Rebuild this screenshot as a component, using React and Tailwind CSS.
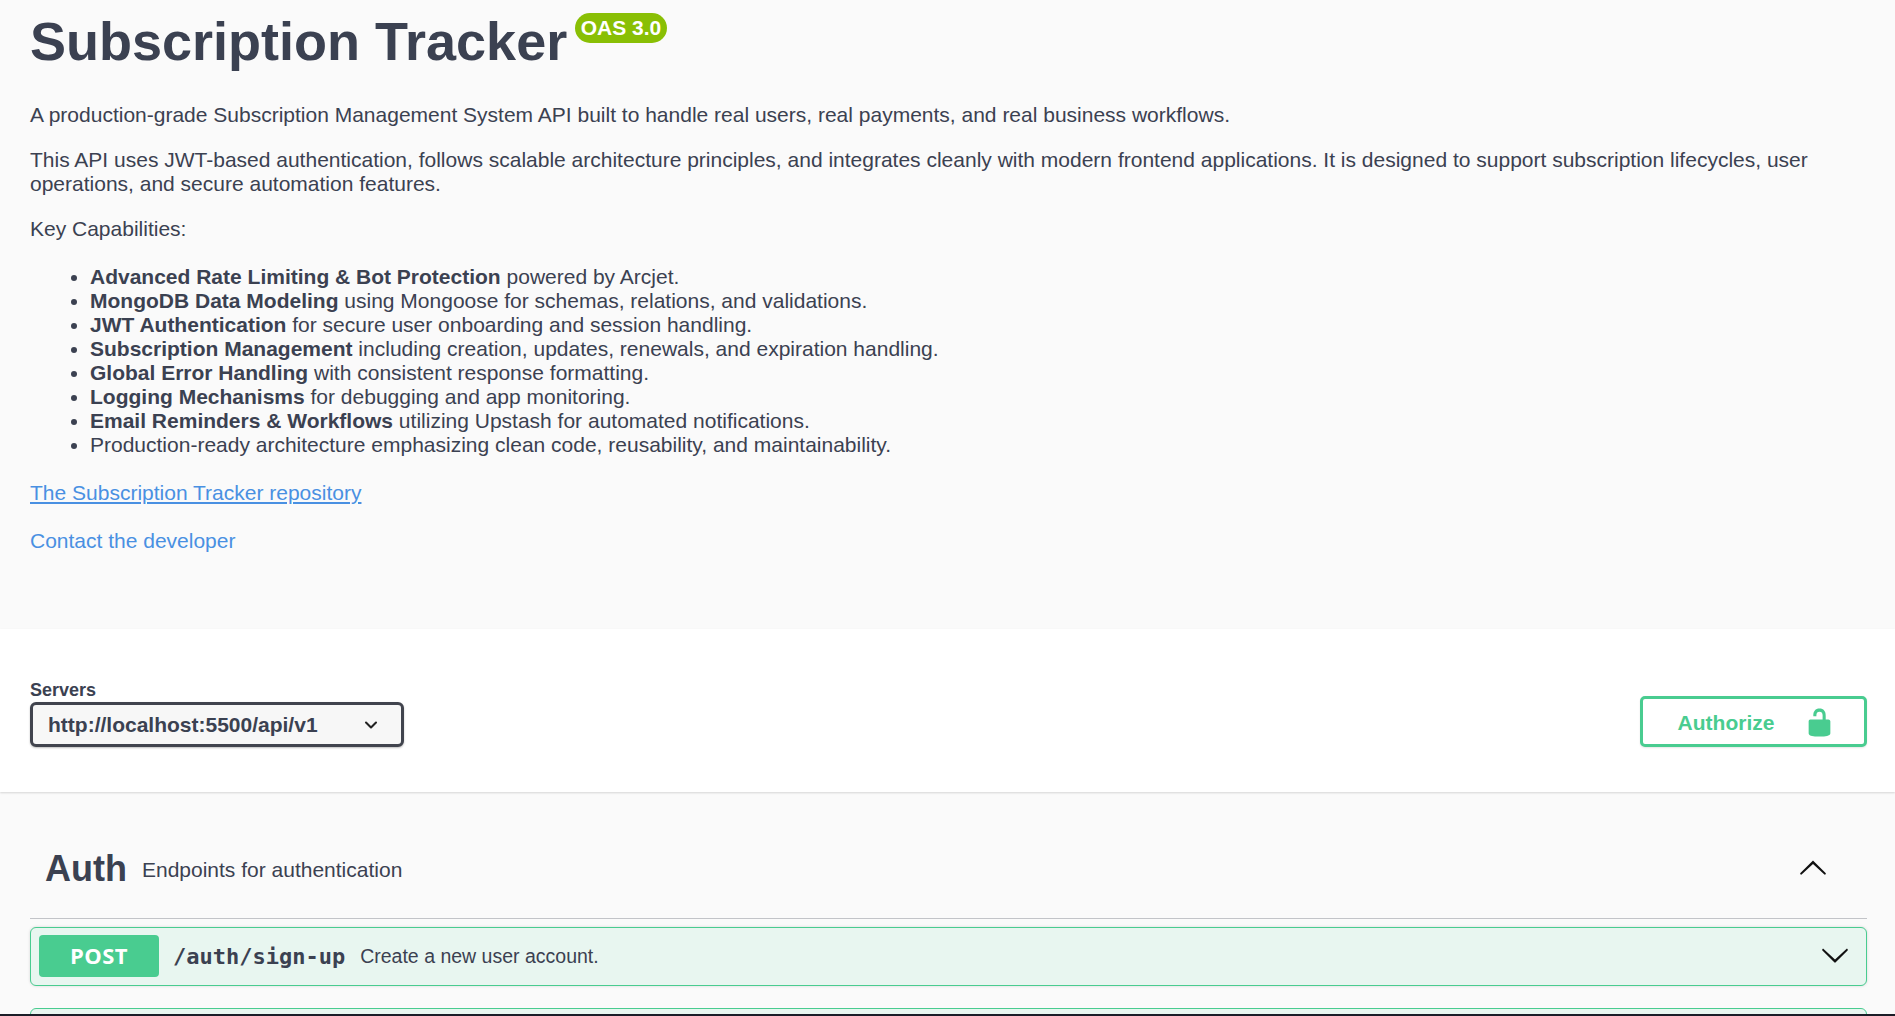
import { ChevronDown } from 'lucide-react';

function Bullet({ strong, children }) {
  return (
    <li>
      {strong && <strong className="font-bold">{strong}</strong>}
      {children}
    </li>
  );
}

export default function App() {
  return (
    <div className="h-screen overflow-hidden flex flex-col bg-[#fafafa] text-[#3b4151] font-['Liberation_Sans',Arial,sans-serif]">
      <section className="h-[629px] shrink-0 px-[30px] pt-[10px]">
        <div className="flex items-start h-[64px]">
          <h1 className="-mt-[1px] text-[54px] leading-[64px] font-bold">Subscription Tracker</h1>
          <span className="ml-[8px] mt-[3px] h-[30px] px-[5.5px] rounded-[15px] bg-[#89bf04] text-white text-[21px] leading-[29px] font-bold">OAS 3.0</span>
        </div>
        <div className="text-[21px] leading-[24px]">
          <p className="mt-[29px]">A production-grade Subscription Management System API built to handle real users, real payments, and real business workflows.</p>
          <p className="mt-[21px]">This API uses JWT-based authentication, follows scalable architecture principles, and integrates cleanly with modern frontend applications. It is designed to support subscription lifecycles, user operations, and secure automation features.</p>
          <p className="mt-[21px]">Key Capabilities:</p>
          <ul className="mt-[24px] pl-[60px] list-disc">
            <Bullet strong="Advanced Rate Limiting & Bot Protection"> powered by Arcjet.</Bullet>
            <Bullet strong="MongoDB Data Modeling"> using Mongoose for schemas, relations, and validations.</Bullet>
            <Bullet strong="JWT Authentication"> for secure user onboarding and session handling.</Bullet>
            <Bullet strong="Subscription Management"> including creation, updates, renewals, and expiration handling.</Bullet>
            <Bullet strong="Global Error Handling"> with consistent response formatting.</Bullet>
            <Bullet strong="Logging Mechanisms"> for debugging and app monitoring.</Bullet>
            <Bullet strong="Email Reminders & Workflows"> utilizing Upstash for automated notifications.</Bullet>
            <Bullet>Production-ready architecture emphasizing clean code, reusability, and maintainability.</Bullet>
          </ul>
          <p className="mt-[24px]"><a className="text-[#4990e2] underline">The Subscription Tracker repository</a></p>
          <p className="mt-[24px]"><a className="text-[#4990e2]">Contact the developer</a></p>
        </div>
      </section>

      <section className="h-[163px] shrink-0 bg-white shadow-[0_1px_2px_rgba(0,0,0,0.15)] pl-[30px] pr-[28px] flex items-end justify-between pb-[45px] relative">
        <div>
          <div className="text-[18px] leading-[20px] font-bold">Servers</div>
          <div className="mt-[2px] w-[374px] h-[45px] border-[3px] border-[#41444e] rounded-[6px] bg-[#f7f7f7] shadow-[0_1px_2px_rgba(0,0,0,0.25)] flex items-center justify-between pl-[15px] pr-[20px]">
            <span className="text-[21px] font-bold">http://localhost:5500/api/v1</span>
            <ChevronDown className="w-[20px] h-[20px] text-[#222]" strokeWidth={2.5} />
          </div>
        </div>
        <button className="w-[227px] h-[51px] border-[3px] border-[#49cc90] rounded-[5px] bg-white text-[#49cc90] text-[21px] font-bold flex items-center justify-center gap-[30px] pl-[6px] pt-[2px] shadow-[0_1px_2px_rgba(0,0,0,0.1)]">
          Authorize
          <svg viewBox="0 0 20 20" className="w-[31px] h-[31px] fill-[#49cc90]">
            <path d="M15.8 8H14V5.6C14 2.703 12.665 1 10 1 7.334 1 6 2.703 6 5.6V6h2v-.801C8 3.754 8.797 3 10 3c1.203 0 2 .754 2 2.199V8H4c-.553 0-1 .646-1 1.199V17c0 .549.428 1.139.951 1.307l1.197.387C5.672 18.861 6.55 19 7.1 19h5.8c.549 0 1.428-.139 1.951-.307l1.196-.387c.524-.167.953-.757.953-1.306V9.199C17 8.646 16.352 8 15.8 8z" />
          </svg>
        </button>
      </section>

      <main className="flex-1 min-h-0 overflow-hidden pl-[30px] pr-[28px]">
        <div className="h-[127px] border-b border-[#c2c4c8] flex items-center pt-[28px] pl-[15px] pr-[39px]">
          <h3 className="text-[36px] font-bold leading-none">Auth</h3>
          <span className="ml-[15px] pt-[1px] text-[21px]">Endpoints for authentication</span>
          <svg viewBox="0 0 20 20" className="ml-auto -mt-[5px] w-[30px] h-[30px] fill-[#111]">
            <path d="M 17.418 14.908 C 17.69 15.176 18.127 15.176 18.397 14.908 C 18.667 14.64 18.668 14.207 18.397 13.939 L 10.489 6.109 C 10.219 5.841 9.782 5.841 9.51 6.109 L 1.602 13.939 C 1.332 14.207 1.332 14.64 1.602 14.908 C 1.873 15.176 2.311 15.176 2.581 14.908 L 10 7.94 Z" />
          </svg>
        </div>
        <div className="mt-[8px] h-[59px] border border-[#49cc90] rounded-[6px] bg-[#e8f6f0] shadow-[0_0_3px_rgba(0,0,0,0.15)] flex items-center pl-[8px] pr-[16px]">
          <span className="-mt-[1px] w-[120px] h-[42px] rounded-[4px] bg-[#49cc90] text-white text-[22px] tracking-[0.5px] pb-[2px] font-bold font-['Open_Sans',sans-serif] flex items-center justify-center">POST</span>
          <span className="ml-[14px] text-[22px] font-bold font-['DejaVu_Sans_Mono',monospace]">/auth/sign-up</span>
          <span className="ml-[15px] pt-[1px] text-[19.5px]">Create a new user account.</span>
          <svg viewBox="0 0 20 20" className="ml-auto -mt-[3px] w-[30px] h-[30px] fill-[#111]">
            <path d="M 17.418 6.109 C 17.69 5.841 18.127 5.841 18.397 6.109 C 18.667 6.377 18.668 6.81 18.397 7.078 L 10.489 14.908 C 10.219 15.176 9.782 15.176 9.51 14.908 L 1.602 7.078 C 1.332 6.81 1.332 6.377 1.602 6.109 C 1.873 5.841 2.311 5.841 2.581 6.109 L 10 13.08 Z" />
          </svg>
        </div>
        <div className="mt-[22px] h-[60px] border border-[#49cc90] rounded-[6px] bg-[#e8f6f0]"></div>
      </main>
      <div className="h-[2px] shrink-0 bg-[#1b1d27] relative"></div>
    </div>
  );
}
